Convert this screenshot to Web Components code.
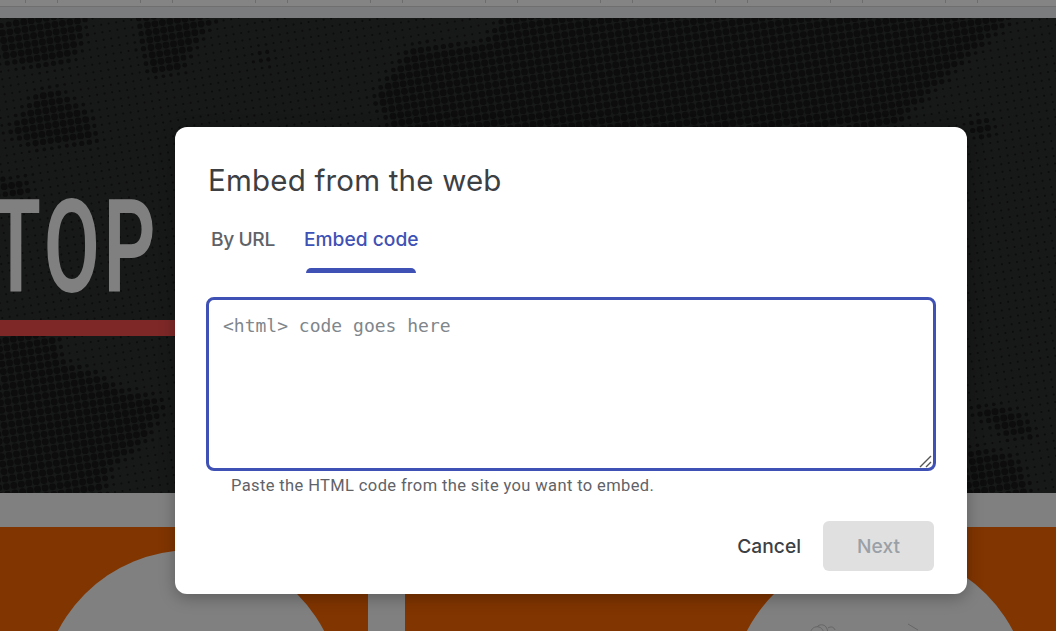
<!DOCTYPE html>
<html>
<head>
<meta charset="utf-8">
<title>Embed from the web</title>
<style>
  html, body { margin: 0; height: 100%; overflow: hidden; background: #7c7c7c; }
</style>
</head>
<body>
<slide-backdrop>
  <embed-dialog heading="Embed from the web">
    <embed-tabs></embed-tabs>
    <code-field placeholder="&lt;html&gt; code goes here" hint="Paste the HTML code from the site you want to embed."></code-field>
    <dialog-actions></dialog-actions>
  </embed-dialog>
</slide-backdrop>

<script>
// patches of larger halftone dots, as polygons in hero coordinates
const PATCHES = [
   [[513,-9],[1026,-9],[965,42],[892,112],[400,125],[372,80],[410,28],[480,25]],
   [[20,-9],[85,-9],[85,20],[70,45],[40,50],[0,45],[-9,15]],
   [[137,-9],[225,-9],[195,30],[180,55],[150,58],[140,30]],
   [[40,72],[60,70],[90,95],[100,125],[30,130],[5,112]],
   [[257,32],[270,32],[270,45],[257,45]],
   [[-9,160],[30,160],[30,180],[-9,180]],
   [[-9,312],[57,312],[62,342],[93,352],[117,369],[167,382],[157,405],[147,422],[113,449],[103,484],[-9,484]],
   [[970,389],[1000,387],[1027,399],[1037,419],[1003,419],[980,399]],
   [[967,432],[983,430],[1017,439],[1030,469],[1030,484],[960,484]],
   [[970,100],[993,100],[993,119],[970,119]]
];

function inPatch(x, y) {
   return PATCHES.some(poly => {
      let hit = false;
      for (let i = 0, j = poly.length - 1; i < poly.length; j = i++) {
         const [xi, yi] = poly[i], [xj, yj] = poly[j];
         if ((yi > y) !== (yj > y) && x < (xj - xi) * (y - yi) / (yj - yi) + xi) hit = !hit;
      }
      return hit;
   });
}

// soft edge: share of nearby sample points that fall in a patch
function dotRadius(x, y) {
   const offs = [[0, 0], [6, 0], [-6, 0], [0, 6], [0, -6], [4, 4], [-4, -4], [4, -4], [-4, 4]];
   const share = offs.filter(([dx, dy]) => inPatch(x + dx, y + dy)).length / offs.length;
   return 1 + 2.4 * share;
}

function halftone(width, height) {
   const step = 7.6, a = -0.16;
   const cos = Math.cos(a), sin = Math.sin(a);
   let out = '';
   for (let i = -20; i < 170; i++) {
      for (let j = -30; j < 90; j++) {
         const x = i * step * cos - j * step * sin;
         const y = i * step * sin + j * step * cos;
         if (x < -4 || y < -4 || x > width + 4 || y > height + 4) continue;
         out += `<circle cx="${x.toFixed(1)}" cy="${y.toFixed(1)}" r="${dotRadius(x, y).toFixed(2)}"/>`;
      }
   }
   return out;
}

class SlideBackdrop extends HTMLElement {
   constructor() {
      super();
      this.attachShadow({mode: 'open'}).innerHTML = `
         <style>
            :host { display: flex; flex-direction: column; position: relative; width: 1056px; height: 631px; overflow: hidden; background: #7c7c7d; font-family: Roboto, "Liberation Sans", sans-serif; }
            .ruler { height: 6px; flex: none; background-color: #848484; border-bottom: 1px solid #6f6f70;
               background-image: repeating-linear-gradient(90deg, transparent 0 25px, #6d6d6d 25px 26px, transparent 26px 57px, #6d6d6d 57px 58px, transparent 58px 115px);
               background-size: 100% 3px; background-repeat: no-repeat; }
            .rulergap { height: 11px; flex: none; background: #7b7c7d; }
            .hero { height: 475px; flex: none; background: #171818; position: relative; overflow: hidden; }
            .hero svg { position: absolute; inset: 0; }
            .hero svg circle { fill: #0d0d0d; }
            .word { position: absolute; left: -9px; top: 155px; margin: 0; font-size: 129px; line-height: 150px; font-weight: 600; color: #808080; transform: scaleX(.63); transform-origin: 0 0; letter-spacing: 6px; white-space: nowrap; }
            .bar { position: absolute; left: 0; top: 302px; width: 180px; height: 16px; background: #7f2828; }
            .gap { height: 34px; flex: none; background: #808080; }
            .cards { flex: 1; display: flex; gap: 37px; background: #808080; }
            .card { position: relative; overflow: hidden; background: #813500; }
            .card.left { width: 368px; flex: none; }
            .card.right { flex: 1; }
            .circle { position: absolute; width: 300px; height: 300px; border-radius: 50%; background: #808080; top: 23px; }
            .left .circle { left: 41px; }
            .right .circle { left: 325px; }
            .doodle { position: absolute; left: 403px; top: 96px; }
         </style>
         <div class="ruler"></div>
         <div class="rulergap"></div>
         <div class="hero">
            <svg width="1056" height="475" viewBox="0 0 1056 475">${halftone(1056, 475)}</svg>
            <p class="word">TOP</p>
            <div class="bar"></div>
         </div>
         <div class="gap"></div>
         <div class="cards">
            <div class="card left"><div class="circle"></div></div>
            <div class="card right"><div class="circle"></div>
               <svg class="doodle" width="130" height="12" viewBox="0 0 130 12" fill="none" stroke="#666" stroke-width="1">
                  <path d="M2 11c1-6 5-8 9-7s5 6 5 8M9 4c2-3 7-3 9 0s2 5 1 8M20 5c3-2 6-1 7 2M100 1l10 6"/>
               </svg>
            </div>
         </div>
         <slot></slot>`;
   }
}

class EmbedDialog extends HTMLElement {
   constructor() {
      super();
      this.attachShadow({mode: 'open'}).innerHTML = `
         <style>
            :host { position: absolute; left: 175px; top: 127px; width: 792px; height: 467px; box-sizing: border-box; display: flex; flex-direction: column; padding: 31px 31px 23px; background: #fff; border-radius: 12px; box-shadow: 0 4px 16px rgba(0,0,0,.28); }
            h2 { margin: 0 0 0 2px; font: 400 29.5px/44px Inter, Roboto, sans-serif; color: #3c4043; letter-spacing: .2px; white-space: nowrap; }
         </style>
         <h2></h2>
         <slot></slot>`;
      this.shadowRoot.querySelector('h2').textContent = this.getAttribute('heading');
   }
}

class EmbedTabs extends HTMLElement {
   constructor() {
      super();
      this.attachShadow({mode: 'open'}).innerHTML = `
         <style>
            :host { display: flex; margin: 15px 0 0 5px; height: 56px; font: 500 19.2px/28px Inter, Roboto, sans-serif; color: #5f6368; }
            .tab { position: relative; padding-top: 8px; white-space: nowrap; }
            .idle { width: 93px; letter-spacing: -.4px; }
            .active { color: #3f51b5; }
            .active::after { content: ""; position: absolute; left: 2px; width: 110px; bottom: 0; height: 5px; background: #3f51b5; border-radius: 5px 5px 0 0; }
         </style>
         <div class="tab idle">By URL</div>
         <div class="tab active">Embed code</div>`;
   }
}

class CodeField extends HTMLElement {
   constructor() {
      super();
      this.attachShadow({mode: 'open'}).innerHTML = `
         <style>
            :host { display: block; margin: 24px 0 0 0; }
            .wrap { position: relative; width: 730px; height: 174px; }
            .box { box-sizing: border-box; height: 100%; padding: 14px 14px; border: 3px solid #3f51b5; border-radius: 8px; font: 18px/24px "DejaVu Sans Mono", "Liberation Mono", monospace; color: #80868b; }
            .grip { position: absolute; right: 3px; bottom: 3px; }
            .hint { margin: 4px 0 0 25px; font: 400 16.5px/22px Roboto, sans-serif; color: #5f6368; white-space: nowrap; letter-spacing: .38px; }
         </style>
         <div class="wrap">
            <div class="box" role="textbox"></div>
            <svg class="grip" width="14" height="13" viewBox="0 0 14 13" fill="none" stroke="#555" stroke-width="1.4">
               <path d="M1 12L12 1M7 12l5-5"/>
            </svg>
         </div>
         <div class="hint"></div>`;
      this.shadowRoot.querySelector('.box').textContent = this.getAttribute('placeholder');
      this.shadowRoot.querySelector('.hint').textContent = this.getAttribute('hint');
   }
}

class DialogActions extends HTMLElement {
   constructor() {
      super();
      this.attachShadow({mode: 'open'}).innerHTML = `
         <style>
            :host { display: flex; justify-content: flex-end; align-items: center; gap: 22px; margin-top: auto; width: 728px; font: 500 19.2px/24px Inter, Roboto, sans-serif; }
            .cancel { color: #3c4043; }
            .next { width: 111px; height: 50px; display: flex; align-items: center; justify-content: center; background: #e0e0e0; border-radius: 6px; color: #9aa0a6; }
         </style>
         <div class="cancel">Cancel</div>
         <div class="next">Next</div>`;
   }
}

customElements.define('slide-backdrop', SlideBackdrop);
customElements.define('embed-dialog', EmbedDialog);
customElements.define('embed-tabs', EmbedTabs);
customElements.define('code-field', CodeField);
customElements.define('dialog-actions', DialogActions);
</script>
</body>
</html>
